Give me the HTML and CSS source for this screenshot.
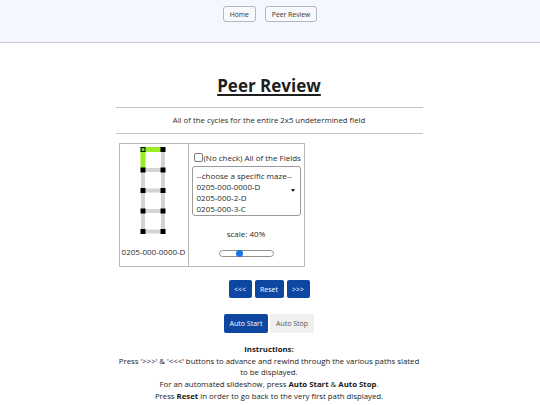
FILE: index.html
```html
<!DOCTYPE html>
<html>
<head>
<meta charset="utf-8">
<link rel="stylesheet" href="styles.css">
</head>
<body>
<header class="topbar">
  <button class="nav-btn">Home</button>
  <button class="nav-btn">Peer Review</button>
</header>
<main class="page">
  <h1 class="title">Peer Review</h1>
  <div class="desc">All of the cycles for the entire 2x5 undetermined field</div>
  <div class="viewer">
    <div class="maze-cell">
      <svg class="maze" width="30" height="92" viewBox="0 0 30 92">
        <g stroke="#d3d3d3" stroke-width="4">
          <line x1="5" y1="2.5" x2="5" y2="84.5"/>
          <line x1="25" y1="2.5" x2="25" y2="84.5"/>
          <line x1="5" y1="23" x2="25" y2="23"/>
          <line x1="5" y1="43.5" x2="25" y2="43.5"/>
          <line x1="5" y1="64" x2="25" y2="64"/>
          <line x1="5" y1="84.5" x2="25" y2="84.5"/>
        </g>
        <g stroke="#99ee22" stroke-width="5">
          <line x1="5" y1="2.5" x2="25" y2="2.5"/>
          <line x1="5" y1="2.5" x2="5" y2="23"/>
        </g>
        <g fill="#000">
          <rect x="22.5" y="0" width="5" height="5"/>
          <rect x="2.5" y="20.5" width="5" height="5"/>
          <rect x="22.5" y="20.5" width="5" height="5"/>
          <rect x="2.5" y="41" width="5" height="5"/>
          <rect x="22.5" y="41" width="5" height="5"/>
          <rect x="2.5" y="61.5" width="5" height="5"/>
          <rect x="22.5" y="61.5" width="5" height="5"/>
          <rect x="2.5" y="82" width="5" height="5"/>
          <rect x="22.5" y="82" width="5" height="5"/>
        </g>
        <rect x="3" y="0.5" width="4" height="4" fill="#55dd22" stroke="#000" stroke-width="1"/>
      </svg>
      <div class="maze-label">0205-000-0000-D</div>
    </div>
    <div class="ctrl-cell">
      <label class="check-row"><span class="checkbox"></span>(No check) All of the Fields</label>
      <div class="select">
        <div class="opts">
          <div>--choose a specific maze--</div>
          <div>0205-000-0000-D</div>
          <div>0205-000-2-D</div>
          <div>0205-000-3-C</div>
          <div>0205-000-4A-D</div>
        </div>
        <span class="arrow"></span>
      </div>
      <div class="scale">scale: 40%</div>
      <div class="slider"><span class="thumb"></span></div>
    </div>
  </div>
  <div class="btn-row">
    <button class="blue-btn narrow">&lt;&lt;&lt;</button>
    <button class="blue-btn wide">Reset</button>
    <button class="blue-btn narrow">&gt;&gt;&gt;</button>
  </div>
  <div class="auto-row">
    <button class="blue-btn auto">Auto Start</button>
    <button class="grey-btn auto">Auto Stop</button>
  </div>
  <div class="instructions">
    <b>Instructions:</b><br>
    Press '&gt;&gt;&gt;' &amp; '&lt;&lt;&lt;' buttons to advance and rewind through the various paths slated to be displayed.<br>
    For an automated slideshow, press <b>Auto Start</b> &amp; <b>Auto Stop</b>.<br>
    Press <b>Reset</b> in order to go back to the very first path displayed.
  </div>
</main>
</body>
</html>
```
FILE: styles.css
```css
html, body {
  margin: 0;
  padding: 0;
  background: #fff;
  font-family: "Open Sans", "Noto Sans", sans-serif;
  color: #1a1a1a;
}
.topbar {
  height: 43px;
  box-sizing: border-box;
  background: #f5f7fe;
  border-bottom: 1px solid #c9cbd4;
  display: flex;
  justify-content: center;
  align-items: flex-start;
  gap: 9px;
  padding-top: 6px;
}
.nav-btn {
  font-family: inherit;
  font-size: 6.8px;
  height: 16px;
  padding: 0 6px;
  background: #f8f9fc;
  border: 1px solid #b4b7c2;
  border-radius: 3px;
  color: #333;
}
.page {
  width: 307px;
  margin: 0 auto;
  padding-right: 2px;
}
.title {
  margin: 30px 0 0;
  height: 34px;
  font-size: 17px;
  font-weight: 700;
  text-align: center;
  text-decoration: underline;
  text-decoration-thickness: 1.5px;
  text-underline-offset: 2px;
  color: #1e1e1e;
  line-height: 26px;
}
.desc {
  border-top: 1px solid #c4c4c4;
  border-bottom: 1px solid #c4c4c4;
  font-size: 7.8px;
  text-align: center;
  height: 25px;
  line-height: 25px;
  color: #2a2a2a;
}
.viewer {
  display: flex;
  margin: 9px 0 0 3px;
  width: 186px;
  height: 124px;
  box-sizing: border-box;
  border: 1px solid #b9b9b9;
}
.maze-cell {
  width: 68px;
  border-right: 1px solid #b9b9b9;
  display: flex;
  flex-direction: column;
  align-items: center;
  padding-top: 3px;
}
.maze {
  display: block;
  margin-right: 2px;
}
.maze-label {
  font-size: 8px;
  margin-top: 7px;
  color: #2a2a2a;
}
.ctrl-cell {
  flex: 1;
  display: flex;
  flex-direction: column;
  align-items: center;
  padding-top: 8px;
}
.check-row {
  display: flex;
  align-items: center;
  font-size: 8px;
  color: #2a2a2a;
  align-self: flex-start;
  margin-left: 5px;
}
.checkbox {
  width: 7px;
  height: 7px;
  border: 1px solid #777;
  border-radius: 2px;
  margin-right: 1px;
  background: #fff;
}
.select {
  margin-top: 3px;
  width: 109px;
  height: 50px;
  box-sizing: border-box;
  border: 1px solid #9a9a9a;
  border-radius: 3px;
  position: relative;
  overflow: hidden;
  display: flex;
}
.opts {
  font-size: 8px;
  line-height: 11px;
  padding: 3px 0 0 4px;
  color: #2a2a2a;
  white-space: nowrap;
}
.arrow {
  position: absolute;
  right: 5px;
  top: 22px;
  width: 0;
  height: 0;
  border-left: 2.5px solid transparent;
  border-right: 2.5px solid transparent;
  border-top: 3px solid #222;
}
.scale {
  font-size: 8px;
  margin-top: 12px;
  color: #2a2a2a;
}
.slider {
  margin-top: 11px;
  width: 55px;
  height: 7px;
  box-sizing: border-box;
  border: 1px solid #8f8f8f;
  border-radius: 4px;
  position: relative;
}
.thumb {
  position: absolute;
  left: 16px;
  top: -1px;
  width: 7px;
  height: 7px;
  border-radius: 50%;
  background: #1a73e8;
}
.btn-row {
  display: flex;
  justify-content: center;
  gap: 3px;
  margin-top: 13px;
}
.blue-btn, .grey-btn {
  font-family: inherit;
  font-size: 7px;
  border: none;
  border-radius: 2px;
  padding: 0;
}
.blue-btn {
  background: #0d47a1;
  color: #fff;
}
.grey-btn {
  background: #efefef;
  color: #555;
}
.narrow { width: 23px; height: 18px; }
.wide { width: 29px; height: 18px; }
.auto-row {
  display: flex;
  justify-content: center;
  gap: 2px;
  margin-top: 16px;
}
.auto { width: 44px; height: 19px; }
.instructions {
  margin-top: 11px;
  font-size: 7.8px;
  line-height: 11.7px;
  text-align: center;
  color: #1a1a1a;
}
```
